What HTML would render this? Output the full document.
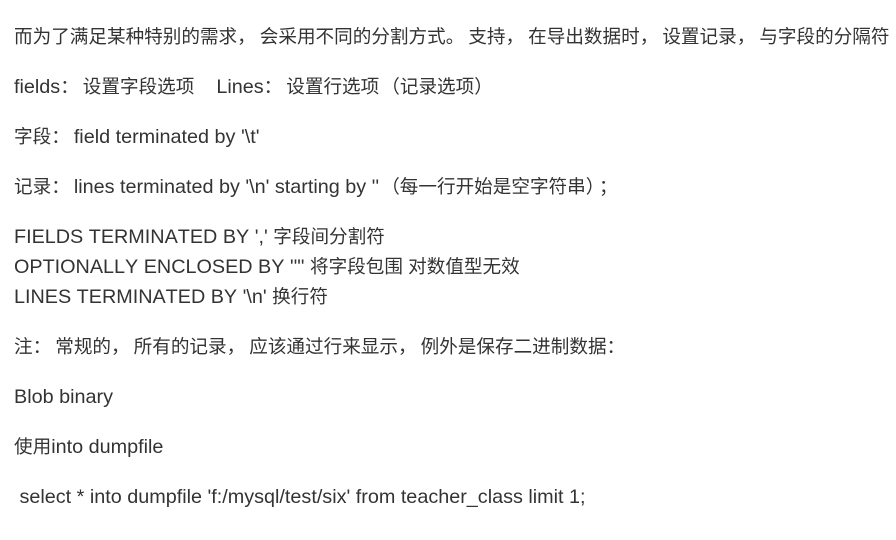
<!DOCTYPE html>
<html><head><meta charset="utf-8"><style>
body{margin:0;width:896px;height:540px;overflow:hidden;background:#fff;}
.c{position:absolute;left:14px;top:0;white-space:nowrap;font-family:"Liberation Sans","Noto Sans CJK SC",sans-serif;font-size:18.6px;color:#333;font-kerning:none;}
.c div{position:absolute;left:0;line-height:30px;}
.c b{font-weight:normal;font-size:19.8px;font-family:"Liberation Sans",sans-serif;}
.c i{font-style:normal;margin-right:4px;}
.c i.r{margin-right:0;margin-left:2px;}
</style></head><body><div class="c">
<div style="top:22px">而为了满足某种特别的需求<i>，</i>会采用不同的分割方式<i>。</i>支持<i>，</i>在导出数据时<i>，</i>设置记录<i>，</i>与字段的分隔符</div>
<div style="top:72px"><b>fields</b><i>：</i>设置字段选项<b>&nbsp;&nbsp;&nbsp; Lines</b><i>：</i>设置行选项<i class="r">（</i>记录选项<i>）</i></div>
<div style="top:122px">字段<i>：</i><b>field terminated by '\t'</b></div>
<div style="top:172px">记录<i>：</i><b>lines terminated by '\n' starting by ''</b><i class="r">（</i>每一行开始是空字符串<i>）</i><i>；</i></div>
<div style="top:222px"><b>FIELDS TERMINATED BY ',' </b>字段间分割符</div>
<div style="top:252px"><b>OPTIONALLY ENCLOSED BY '"' </b>将字段包围 对数值型无效</div>
<div style="top:282px"><b>LINES TERMINATED BY '\n' </b>换行符</div>
<div style="top:332px">注<i>：</i>常规的<i>，</i>所有的记录<i>，</i>应该通过行来显示<i>，</i>例外是保存二进制数据<i>：</i></div>
<div style="top:382px"><b>Blob binary</b></div>
<div style="top:432px">使用<b>into dumpfile</b></div>
<div style="top:482px"><b>&nbsp;select * into dumpfile 'f:/mysql/test/six' from teacher_class limit 1;</b></div>
</div></body></html>
